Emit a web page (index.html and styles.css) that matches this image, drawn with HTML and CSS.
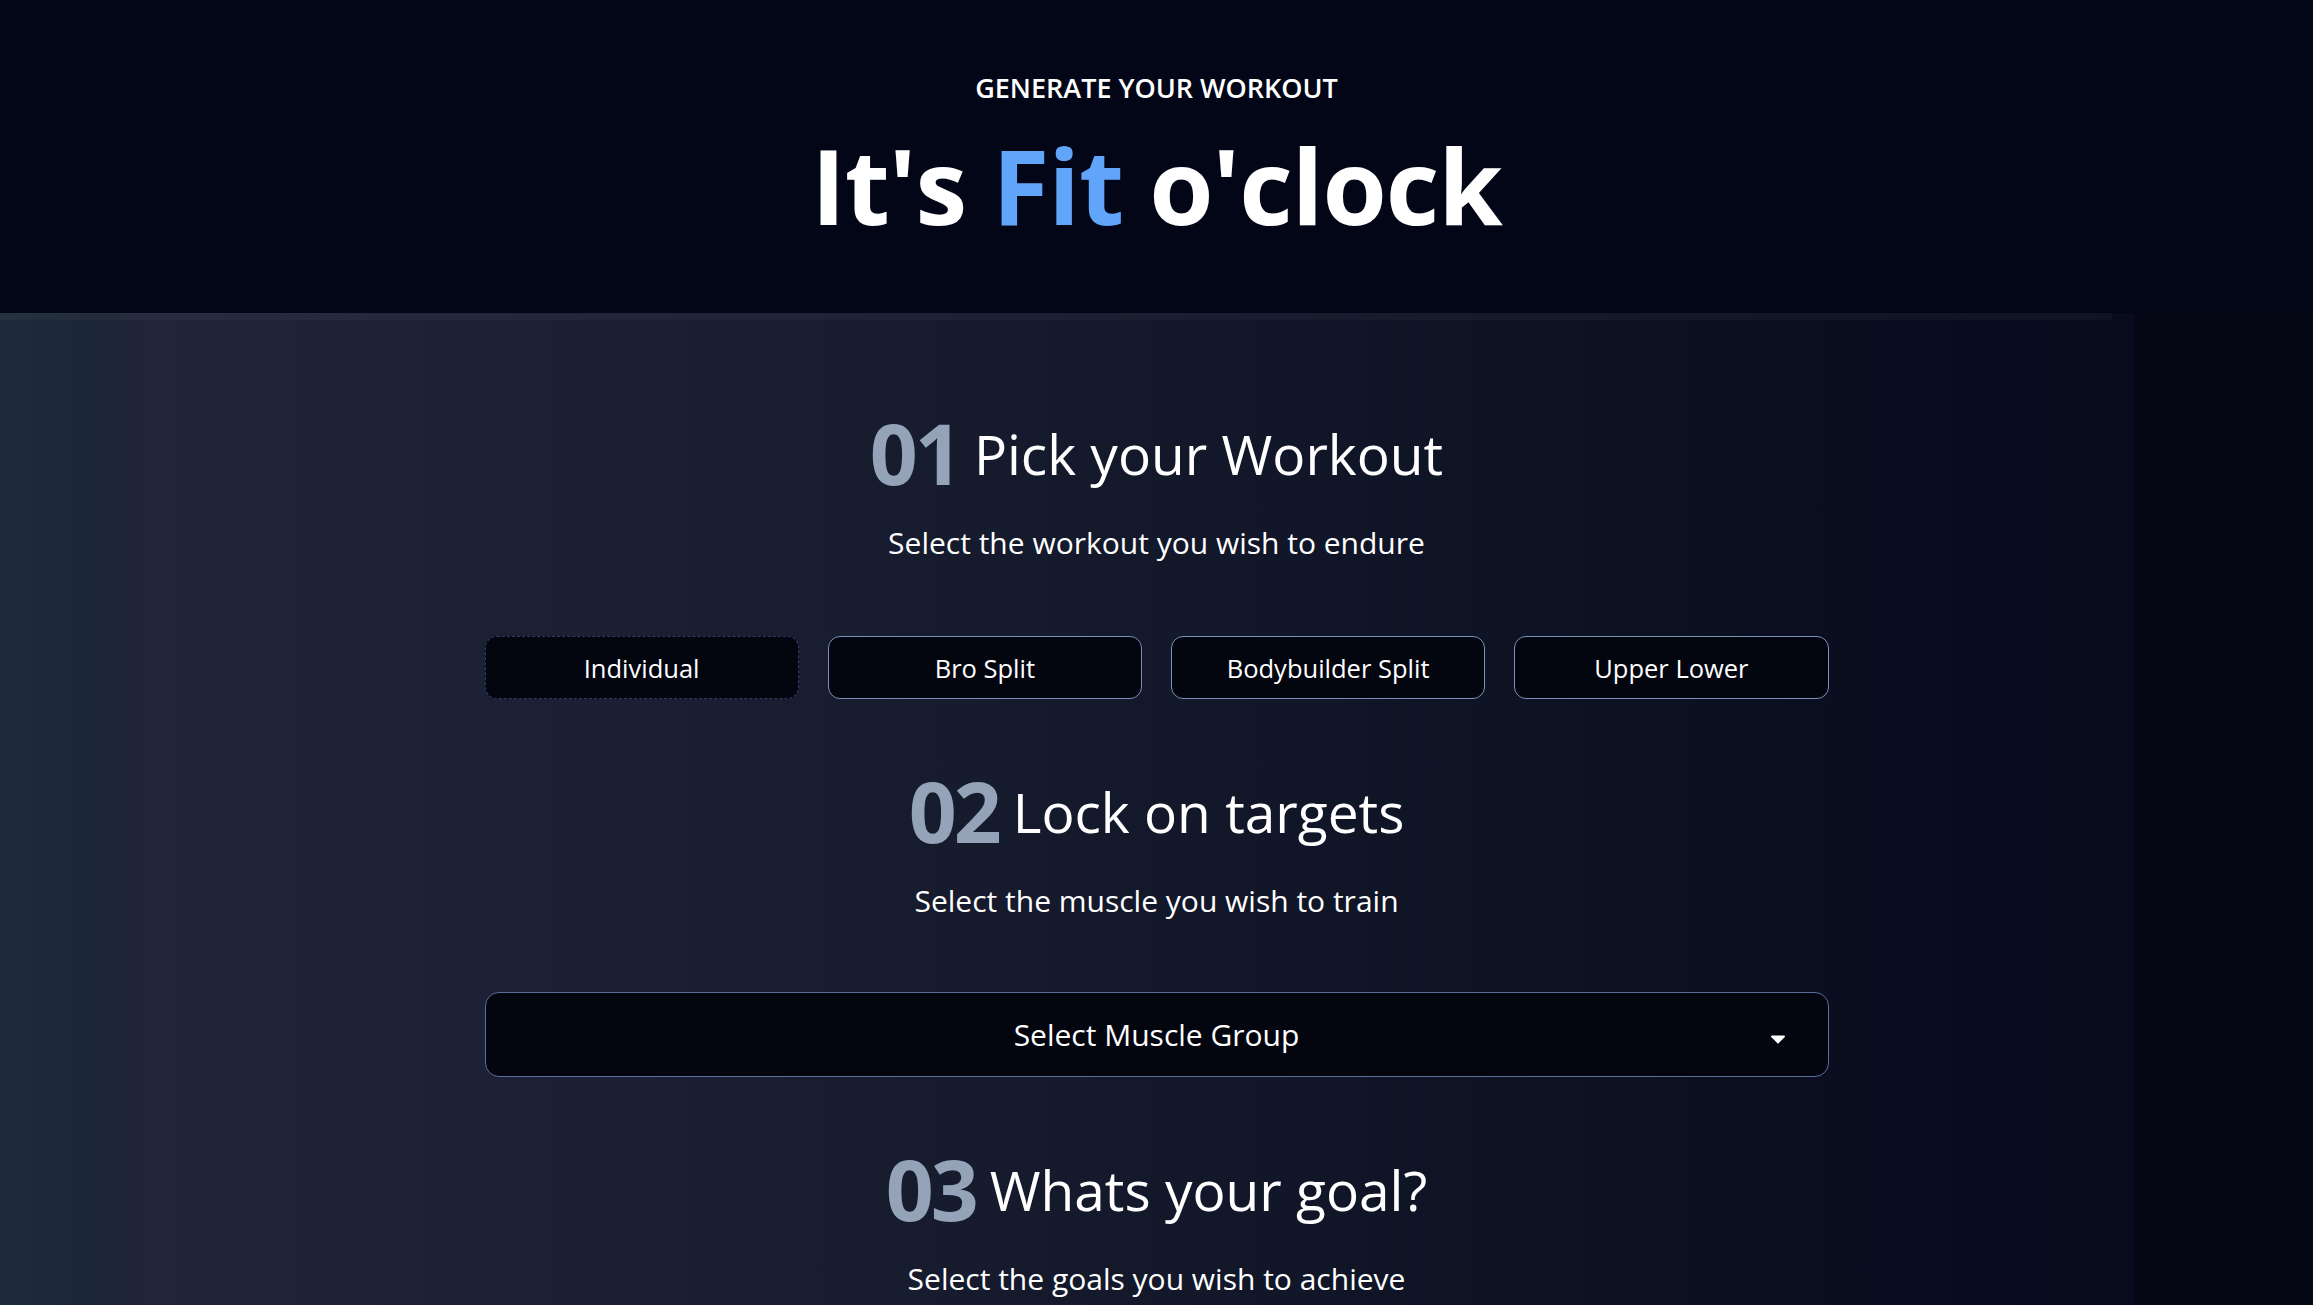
FILE: index.html
```html
<!DOCTYPE html>
<html lang="en">
<head>
<meta charset="utf-8">
<title>It's Fit o'clock</title>
<link rel="stylesheet" href="styles.css">
</head>
<body>
<header class="hero">
  <p class="eyebrow">GENERATE YOUR WORKOUT</p>
  <h1 class="title">It's <span class="accent">Fit</span> o'clock</h1>
</header>
<main class="generator">
  <section class="step">
    <div class="step-head"><span class="step-num">01</span><h2 class="step-title">Pick your Workout</h2></div>
    <p class="step-sub">Select the workout you wish to endure</p>
    <div class="options">
      <button class="option option-active">Individual</button>
      <button class="option">Bro Split</button>
      <button class="option">Bodybuilder Split</button>
      <button class="option">Upper Lower</button>
    </div>
  </section>
  <section class="step">
    <div class="step-head"><span class="step-num">02</span><h2 class="step-title">Lock on targets</h2></div>
    <p class="step-sub">Select the muscle you wish to train</p>
    <button class="dropdown">
      <span class="dropdown-label">Select Muscle Group</span>
      <svg class="caret" viewBox="0 0 16 10" width="16" height="10" aria-hidden="true"><path d="M2 1.5h12a1 1 0 0 1 .8 1.6l-6 6a1 1 0 0 1-1.6 0l-6-6A1 1 0 0 1 2 1.5z" fill="#ffffff"/></svg>
    </button>
  </section>
  <section class="step">
    <div class="step-head"><span class="step-num">03</span><h2 class="step-title">Whats your goal?</h2></div>
    <p class="step-sub">Select the goals you wish to achieve</p>
  </section>
</main>
</body>
</html>
```
FILE: styles.css
```css
* { box-sizing: border-box; }
html, body { margin: 0; padding: 0; }
body {
  background: #04060f;
  color: #ffffff;
  font-family: "Open Sans", "Noto Sans", sans-serif;
  min-height: 1305px;
}
.hero {
  background: #030616;
  height: 313px;
  display: flex;
  flex-direction: column;
  align-items: center;
  padding-top: 67px;
}
.eyebrow {
  margin: 0;
  font-size: 27px;
  line-height: 42px;
  font-weight: 600;
}
.title {
  margin: 24px 0 0;
  font-size: 104px;
  line-height: 104px;
  font-weight: 700;
  letter-spacing: -1px;
}
.accent { color: #60a5fa; }
.generator {
  min-height: 992px;
  padding: 95px 0 40px;
  background:
    linear-gradient(rgba(255,255,255,0.03), rgba(255,255,255,0.03)) 0 0 / 2112px 7px no-repeat,
    linear-gradient(to right, #1e2b3a 0%, #1c2636 4%, #212538 7%, #1d2135 20%, #171c2f 38%, #111628 55%, #0c1122 72%, #080c1e 86%, #070b1c 92.3%, #050714 92.3%);
  display: flex;
  flex-direction: column;
  align-items: center;
  gap: 67px;
}
.step {
  width: 1344px;
  display: flex;
  flex-direction: column;
  align-items: center;
}
.step-head {
  display: flex;
  align-items: center;
  gap: 14px;
  height: 90px;
}
.step-num {
  font-size: 84px;
  line-height: 1;
  font-weight: 700;
  color: #94a3b8;
  letter-spacing: -3px;
}
.step-title {
  margin: 0;
  font-size: 55px;
  line-height: 1;
  font-weight: 400;
}
.step-sub {
  margin: 24px 0 0;
  font-size: 30px;
  line-height: 42px;
}
.options {
  margin-top: 72px;
  width: 100%;
  display: grid;
  grid-template-columns: repeat(4, 1fr);
  gap: 29px;
}
.option {
  height: 63px;
  background: #03050f;
  border: 1px solid #7a8fba;
  border-radius: 12px;
  color: #ffffff;
  font-family: inherit;
  font-size: 25.5px;
}
.option-active {
  border: 1px dashed #2f3c66;
}
.dropdown {
  margin-top: 70px;
  width: 100%;
  height: 85px;
  background: #03050f;
  border: 1px solid #5a6f9c;
  border-radius: 14px;
  color: #ffffff;
  font-family: inherit;
  font-size: 30px;
  display: flex;
  align-items: center;
  justify-content: center;
  position: relative;
}
.caret {
  position: absolute;
  right: 42px;
  top: 41px;
}
```
